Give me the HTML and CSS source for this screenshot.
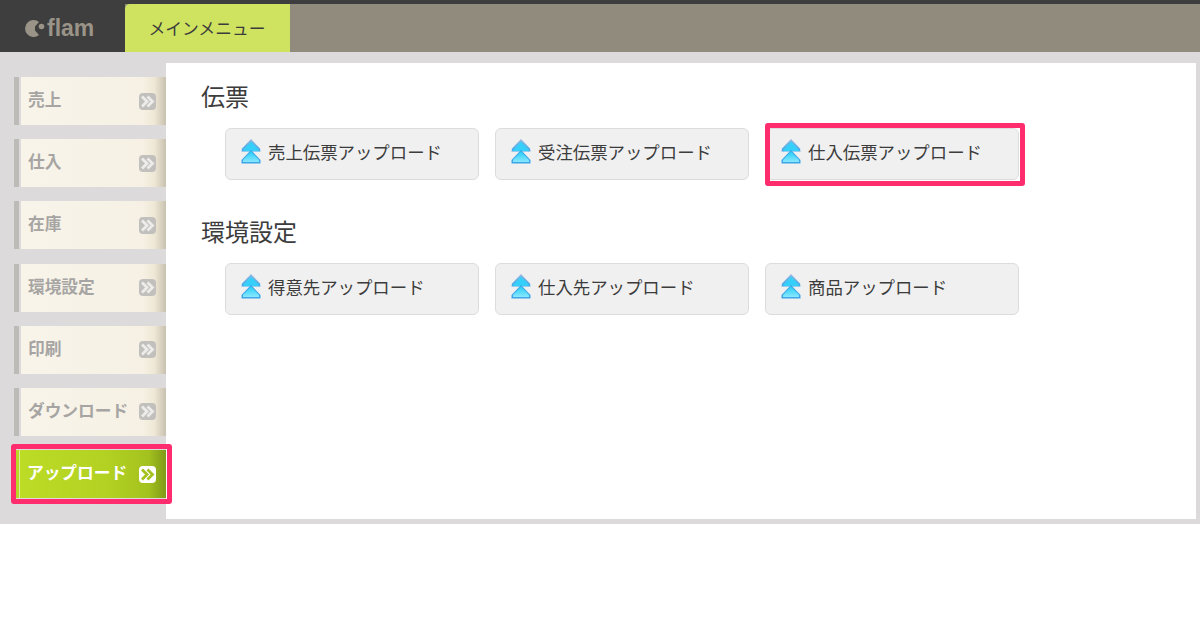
FILE: index.html
```html
<!DOCTYPE html>
<html lang="ja">
<head>
<meta charset="utf-8">
<title>flam</title>
<link rel="stylesheet" href="styles.css">
</head>
<body>
<svg class="defs" width="0" height="0" aria-hidden="true">
  <defs>
    <linearGradient id="up1" x1="0" y1="0" x2="0" y2="1"><stop offset="0" stop-color="#9ab8e0"/><stop offset="1" stop-color="#3fa8e8"/></linearGradient>
    <linearGradient id="up2" x1="0" y1="0" x2="0" y2="1"><stop offset="0" stop-color="#22cdfb"/><stop offset="1" stop-color="#8ae8fd"/></linearGradient>
    <symbol id="upload" viewBox="0 0 20 25">
      <path d="M10 0 L19 9.5 L19.5 12.5 H0.5 L1 9.5 Z" fill="url(#up1)"/>
      <path d="M10 2.5 L17.5 10.5 L17.5 12 H2.5 L2.5 10.5 Z" fill="#35cff9"/>
      <path d="M10 11 L19.5 21 L19.5 24.5 H0.5 L0.5 21 Z" fill="#3ea6e8"/>
      <path d="M10 12.5 L18 21 L18 23 H2 L2 21 Z" fill="url(#up2)"/>
    </symbol>
    <symbol id="chev" viewBox="0 0 17 17">
      <path d="M3 3.5 L8 8.5 L3 13.5 M8.5 3.5 L13.5 8.5 L8.5 13.5" fill="none" stroke="currentColor" stroke-width="2.8"/>
    </symbol>
  </defs>
</svg>
<div class="app">
  <header class="topbar">
    <div class="logo">
      <svg class="logo-mark" viewBox="0 0 20 17" aria-hidden="true"><path d="M14 2 A8.5 8.5 0 1 0 14 15 L10 10.5 L10 6.5 Z" fill="#9a9488"/><circle cx="16.5" cy="6.5" r="2.8" fill="#9a9488"/></svg>
      <span class="logo-text">flam</span>
    </div>
    <div class="tab">メインメニュー</div>
  </header>
  <div class="body">
    <nav class="side">
      <a class="side-item"><span>売上</span><svg class="chev"><use href="#chev"/></svg></a>
      <a class="side-item"><span>仕入</span><svg class="chev"><use href="#chev"/></svg></a>
      <a class="side-item"><span>在庫</span><svg class="chev"><use href="#chev"/></svg></a>
      <a class="side-item"><span>環境設定</span><svg class="chev"><use href="#chev"/></svg></a>
      <a class="side-item"><span>印刷</span><svg class="chev"><use href="#chev"/></svg></a>
      <a class="side-item"><span>ダウンロード</span><svg class="chev"><use href="#chev"/></svg></a>
      <a class="side-item active"><span>アップロード</span><svg class="chev"><use href="#chev"/></svg></a>
    </nav>
    <main class="panel">
      <h2 class="title">伝票</h2>
      <div class="grid">
        <a class="btn"><svg class="up"><use href="#upload"/></svg>売上伝票アップロード</a>
        <a class="btn"><svg class="up"><use href="#upload"/></svg>受注伝票アップロード</a>
        <a class="btn mark"><svg class="up"><use href="#upload"/></svg>仕入伝票アップロード</a>
      </div>
      <h2 class="title">環境設定</h2>
      <div class="grid">
        <a class="btn"><svg class="up"><use href="#upload"/></svg>得意先アップロード</a>
        <a class="btn"><svg class="up"><use href="#upload"/></svg>仕入先アップロード</a>
        <a class="btn"><svg class="up"><use href="#upload"/></svg>商品アップロード</a>
      </div>
    </main>
  </div>
</div>
</body>
</html>
```
FILE: styles.css
```css
* { box-sizing: border-box; }
html, body { margin: 0; padding: 0; background: #fff; }
body { font-family: "Noto Sans CJK JP", "Noto Sans", sans-serif; color: #3c3c3c; }
.defs { position: absolute; }
.app { width: 1200px; height: 524px; display: flex; flex-direction: column; background: #dcdada; }
.topbar { height: 52px; display: flex; background: #918b7d; border-top: 4px solid #3e3e3e; }
.logo { width: 125px; background: #3e3e3e; display: flex; align-items: center; gap: 2px; padding: 1px 0 0 25px; }
.logo-mark { width: 20px; height: 17px; flex: none; }
.logo-text { font-family: "Liberation Sans", sans-serif; font-weight: 700; font-size: 23px; line-height: 1; color: #9a9488; }
.tab { width: 165px; background: #cfe361; border-radius: 5px 0 0 0; display: flex; align-items: center; justify-content: center; padding-right: 1px; font-size: 16.8px; color: #3c3c3c; }
.body { flex: 1; display: flex; padding: 11px 4px 5px 0; }
.side { width: 166px; padding: 14px 0 0 14px; display: flex; flex-direction: column; gap: 14.2px; flex: none; position: relative; z-index: 1; }
.side-item { position: relative; height: 48px; display: flex; align-items: center; justify-content: space-between; padding: 0 10px 0 9px; color: #a6a5a3; font-weight: 700; font-size: 16.7px; border-left: 5px solid #bdbbb8; background: linear-gradient(#dcdada, #dcdada) left / 2px 100% no-repeat, linear-gradient(90deg, #f8f4ea 0, #f6f1e4 84%, #efe8d6 92%, #c9c1b0 100%); }
.side-item span { white-space: nowrap; margin-bottom: 4px; }
.chev { width: 17px; height: 17px; border-radius: 4px; background: #c2c0bd; color: #eeecea; flex: none; }
.side-item.active { color: #fff; border-left-color: #b8d826; padding-left: 8px; background: linear-gradient(#dfe9a0, #dfe9a0) left / 1px 100% no-repeat, linear-gradient(90deg, #bddc26 0, #b2d122 60%, #a4c21e 88%, #7f9a18 100%); }
.side-item.active .chev { background: #fff; color: #a4c21e; }
.side-item.active::after { content: ""; position: absolute; top: -6px; bottom: -6px; left: -8px; right: -6px; border: 5.5px solid #ff2d6e; border-radius: 3px; }
.panel { flex: 1; background: #fff; padding: 15px 35px 0; }
.title { margin: 0; font-weight: 400; font-size: 24px; line-height: 36px; color: #3c3c3c; }
.grid { display: grid; grid-template-columns: repeat(3, 254px); gap: 16px; margin: 14px 0 33px 24px; }
.btn { position: relative; height: 52px; display: flex; align-items: center; gap: 7px; padding: 0 0 6px 15px; background: #f0f0f0; border: 1px solid #dcdcdc; border-radius: 6px; font-size: 17.4px; color: #3c3c3c; white-space: nowrap; }
.btn.mark::after { content: ""; position: absolute; top: -6px; bottom: -7px; left: -1px; right: -7px; border: 5px solid #ff2d6e; border-radius: 3px; }
.up { width: 20px; height: 25px; flex: none; }
```
